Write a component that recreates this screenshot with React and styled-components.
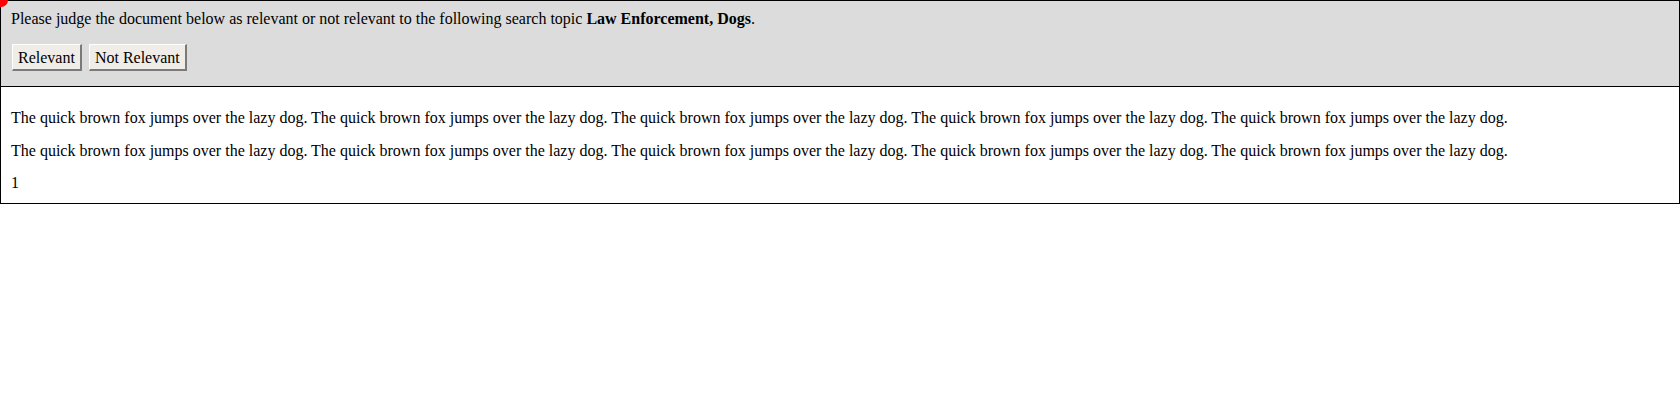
import React from 'react';
import styled, { createGlobalStyle } from 'styled-components';

const GlobalStyle = createGlobalStyle`
    html, body {
        margin: 0;
        padding: 0;
        background: #ffffff;
    }
    body {
        font-family: 'Liberation Serif', 'Times New Roman', serif;
        font-size: 16px;
        color: #000000;
    }
`;

//red marker at the corner
const Marker = styled.div`
    position: absolute;
    top: -7px;
    left: -6px;
    width: 14px;
    height: 14px;
    border-radius: 50%;
    background: #ff0000;
`;

const Page = styled.div`
    position: relative;
    overflow: hidden;
`;

//judging panel
const JudgePanel = styled.section`
    box-sizing: border-box;
    background: #dcdcdc;
    border: 1px solid #000000;
    padding: 8px 10px 15px 10px;
`;

const Prompt = styled.div`
    line-height: 19px;
`;

const ButtonRow = styled.div`
    display: flex;
    gap: 7px;
    margin-top: 16px;
    padding-left: 1px;
`;

const JudgeButton = styled.button`
    font-family: 'Liberation Serif', 'Times New Roman', serif;
    font-size: 16px;
    color: #000000;
    background: #f0ede8;
    border-style: solid;
    border-width: 1px 2px 2px 1px;
    border-color: #ffffff #7a7a7a #7a7a7a #ffffff;
    padding: 3px 5px 3px 5px;
    height: 27px;
    line-height: 19px;
    cursor: pointer;
`;

//document panel
const DocumentPanel = styled.section`
    box-sizing: border-box;
    border: 1px solid #000000;
    border-top: none;
    padding: 21px 10px 11px 10px;
`;

const Paragraph = styled.p`
    margin: 0 0 13.5px 0;
    line-height: 19px;
    &:last-child {
        margin-bottom: 0;
    }
`;

const sentence = 'The quick brown fox jumps over the lazy dog.';
const line = Array(5).fill(sentence).join(' ');

export default function App() {
    return (
        <Page>
            <GlobalStyle />
            <Marker />
            <JudgePanel>
                <Prompt>
                    Please judge the document below as relevant or not relevant to the following search topic <b>Law Enforcement, Dogs</b>.
                </Prompt>
                <ButtonRow>
                    <JudgeButton>Relevant</JudgeButton>
                    <JudgeButton>Not Relevant</JudgeButton>
                </ButtonRow>
            </JudgePanel>
            <DocumentPanel>
                <Paragraph>{line}</Paragraph>
                <Paragraph>{line}</Paragraph>
                <Paragraph>1</Paragraph>
            </DocumentPanel>
        </Page>
    );
}
